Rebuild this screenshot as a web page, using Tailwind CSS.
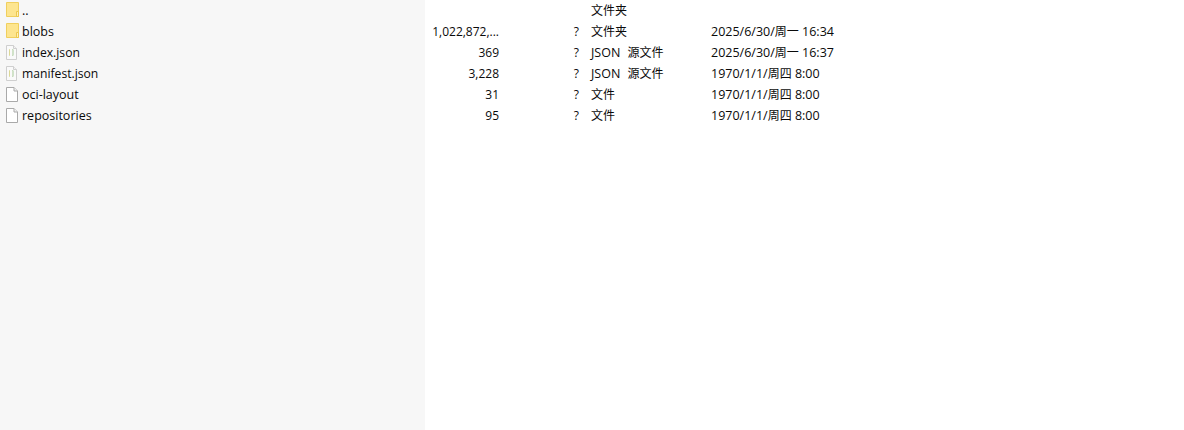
<!DOCTYPE html>
<html lang="zh">
<head>
  <meta charset="UTF-8" />
  <title>文件列表</title>
  <script src="https://cdn.jsdelivr.net/npm/@tailwindcss/browser@4"></script>
</head>
<body class="bg-white">
  <svg class="hidden">
    <symbol id="folder" viewBox="0 0 14 16">
      <path d="M0.5 0.5H12.5V14.5H0.5Z" fill="#fde58f" stroke="#f0cf5e"/>
      <path d="M10.5 9.5H12.5V14.5H10.5Z" fill="#fff1b8" stroke="#ecc84f"/>
    </symbol>
    <symbol id="file" viewBox="0 0 14 16">
      <path d="M0.5 1.5H8L11.5 5V15.5H0.5Z" fill="#fff" stroke="#a9a9a9"/>
      <path d="M8 1.5V5H11.5" fill="#f2f2f2" stroke="#a9a9a9"/>
    </symbol>
    <symbol id="json" viewBox="0 0 14 16">
      <path d="M0.5 1.5H7.5L10.5 4.5V15.5H0.5Z" fill="#fafafa" stroke="#cfcfcf"/>
      <path d="M7.5 1.5V4.5H10.5" fill="#f2f2f2" stroke="#cfcfcf"/>
      <path d="M4 5.5H3.5V11.5H4" fill="none" stroke="#dcd896"/>
      <path d="M6.5 5.5H7V11.5H6.5" fill="none" stroke="#a8cb98"/>
    </symbol>
  </svg>

  <div class="flex h-[430px] overflow-hidden text-[12.5px] leading-[21px] text-[#0a0a0a] font-['Open_Sans','Noto_Sans_CJK_SC',sans-serif]">
    <!-- 左侧文件名 -->
    <div class="w-[425px] shrink-0 bg-[#f7f7f7]">
      <div class="flex h-[21px]"><svg class="ml-[6px] mr-[2px] mt-[2px] h-4 w-[14px]"><use href="#folder"/></svg><span>..</span></div>
      <div class="flex h-[21px]"><svg class="ml-[6px] mr-[2px] mt-[2px] h-4 w-[14px]"><use href="#folder"/></svg><span>blobs</span></div>
      <div class="flex h-[21px]"><svg class="ml-[6px] mr-[2px] mt-[2px] h-4 w-[14px]"><use href="#json"/></svg><span class="text-[12.15px]">index.json</span></div>
      <div class="flex h-[21px]"><svg class="ml-[6px] mr-[2px] mt-[2px] h-4 w-[14px]"><use href="#json"/></svg><span class="text-[12.15px]">manifest.json</span></div>
      <div class="flex h-[21px]"><svg class="ml-[6px] mr-[2px] mt-[2px] h-4 w-[14px]"><use href="#file"/></svg><span>oci-layout</span></div>
      <div class="flex h-[21px]"><svg class="ml-[6px] mr-[2px] mt-[2px] h-4 w-[14px]"><use href="#file"/></svg><span>repositories</span></div>
    </div>
    <!-- 右侧详情 -->
    <div class="flex-1">
      <div class="flex h-[21px]"><span class="w-[74px] text-right text-[12px]"></span><span class="w-[80px] text-right text-[12px]"></span><span class="ml-[12px] w-[120px] text-[12px]">文件夹</span><span></span></div>
      <div class="flex h-[21px]"><span class="w-[74px] text-right text-[12px]">1,022,872,...</span><span class="w-[80px] text-right text-[12px]">?</span><span class="ml-[12px] w-[120px] text-[12px]">文件夹</span><span>2025/6/30/<span class="text-[12px]">周一</span> 16:34</span></div>
      <div class="flex h-[21px]"><span class="w-[74px] text-right text-[12px]">369</span><span class="w-[80px] text-right text-[12px]">?</span><span class="ml-[12px] w-[120px]">JSON <span class="ml-[4px] text-[12px]">源文件</span></span><span>2025/6/30/<span class="text-[12px]">周一</span> 16:37</span></div>
      <div class="flex h-[21px]"><span class="w-[74px] text-right text-[12px]">3,228</span><span class="w-[80px] text-right text-[12px]">?</span><span class="ml-[12px] w-[120px]">JSON <span class="ml-[4px] text-[12px]">源文件</span></span><span>1970/1/1/<span class="text-[12px]">周四</span> 8:00</span></div>
      <div class="flex h-[21px]"><span class="w-[74px] text-right text-[12px]">31</span><span class="w-[80px] text-right text-[12px]">?</span><span class="ml-[12px] w-[120px] text-[12px]">文件</span><span>1970/1/1/<span class="text-[12px]">周四</span> 8:00</span></div>
      <div class="flex h-[21px]"><span class="w-[74px] text-right text-[12px]">95</span><span class="w-[80px] text-right text-[12px]">?</span><span class="ml-[12px] w-[120px] text-[12px]">文件</span><span>1970/1/1/<span class="text-[12px]">周四</span> 8:00</span></div>
    </div>
  </div>
</body>
</html>
